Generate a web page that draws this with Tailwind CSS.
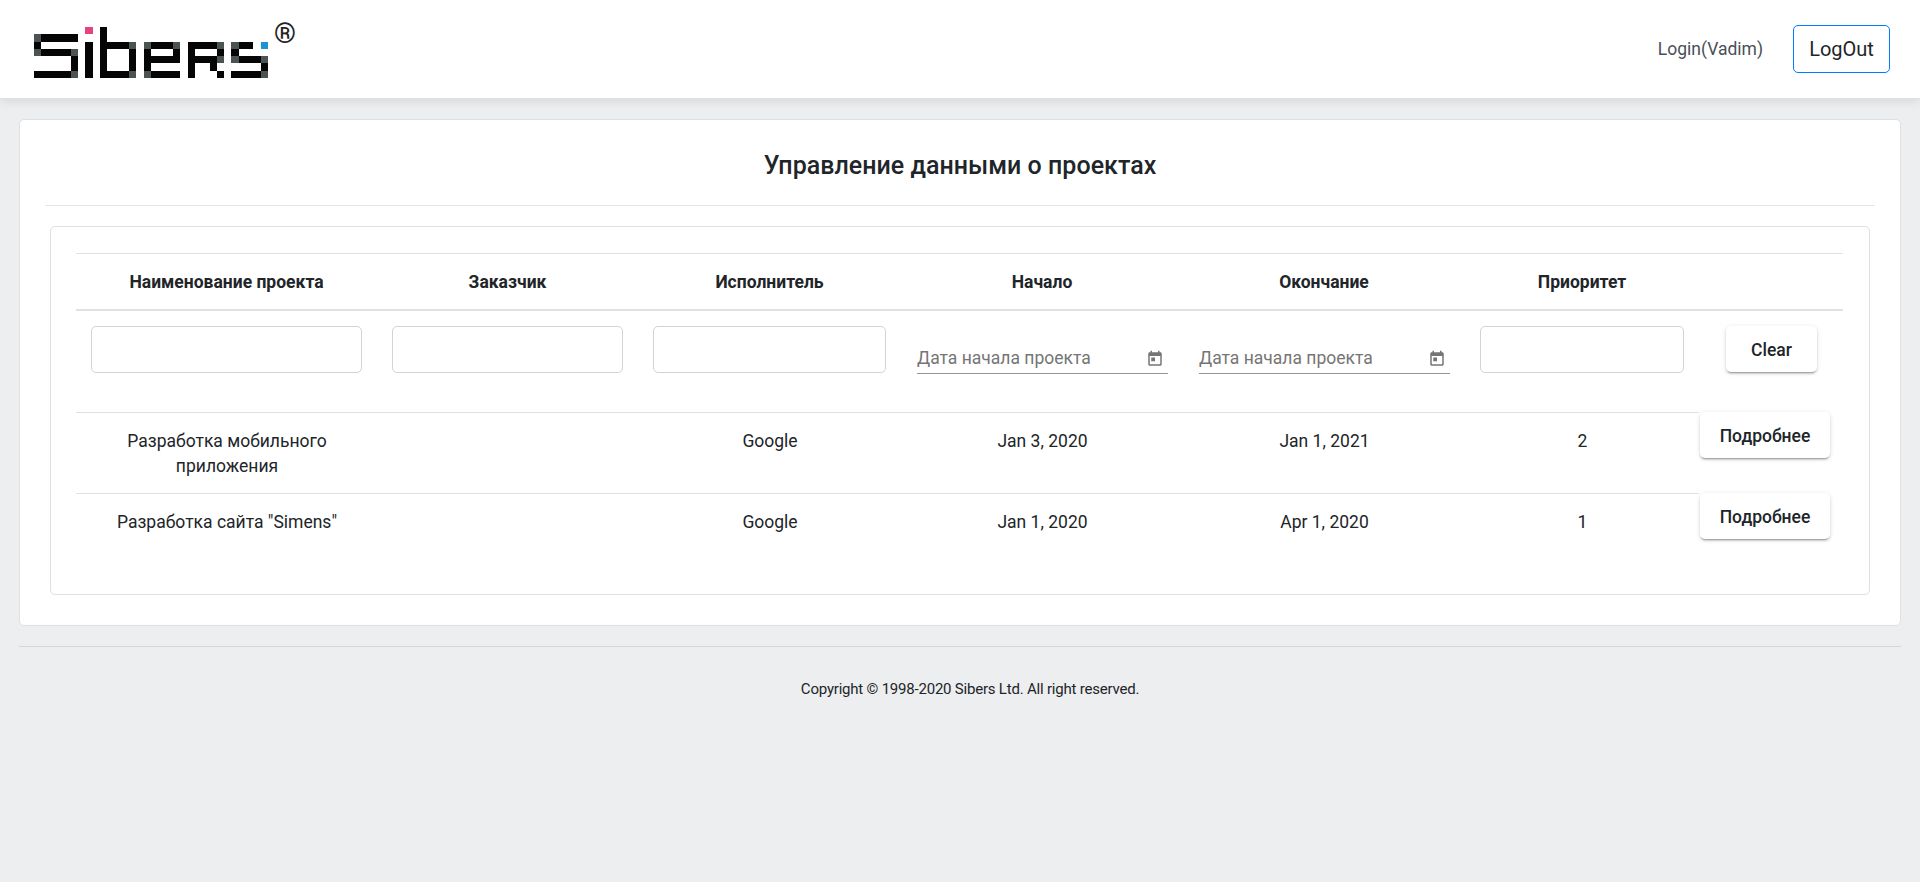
<!DOCTYPE html>
<html lang="ru">
<head>
<meta charset="utf-8">
<title>Sibers</title>
<script src="https://cdn.jsdelivr.net/npm/@tailwindcss/browser@4"></script>
</head>
<body class="min-h-screen bg-[#edeef0] font-[Roboto,sans-serif] text-[#212529]">
<header class="relative flex h-[99px] items-center justify-between border-b border-[#dee2e6] bg-white pl-[34px] pr-[30px] shadow-[0_2px_10px_rgba(0,0,0,0.1)]">
  <div class="flex items-start gap-[6px] self-start pt-[18px]">
    <svg class="mt-[9px] h-[51px] w-[234px]" viewBox="0 0 32 7" preserveAspectRatio="none" shape-rendering="crispEdges">
      <path fill="#050505" d="M1 1h5v1H1zM0 2h1v1H0zM1 3h4v1H1zM5 4h1v2H5zM0 6h5v1H0zM7 2h1v5H7zM9 0h1v7H9zM10 2h3v1h-3zM13 3h1v3h-1zM10 6h3v1h-3zM16 2h3v1h-3zM15 3h1v3h-1zM19 3h1v2h-1zM16 4h3v1h-3zM16 6h4v1h-4zM21 2h1v5h-1zM22 2h3v1h-3zM25 3h1v1h-1zM22 4h3v1h-3zM24 5h1v1h-1zM25 6h1v1h-1zM28 2h2v1h-2zM27 3h1v1h-1zM28 4h3v1h-3zM31 5h1v1h-1zM27 6h4v1h-4z"/>
      <path fill="#4c5355" d="M0 1h1v1H0zM0 3h1v1H0zM5 3h1v1H5zM5 6h1v1H5zM13 2h1v1h-1zM13 6h1v1h-1zM15 2h1v1h-1zM19 2h1v1h-1zM15 6h1v1h-1zM25 2h1v1h-1zM25 4h1v1h-1zM27 2h1v1h-1zM27 4h1v1h-1zM31 4h1v1h-1zM31 6h1v1h-1z"/>
      <path fill="#e8417f" d="M7 0h1v1H7z"/>
      <path fill="#1b93d4" d="M31 2h1v1h-1z"/>
    </svg>
    <span class="text-[28px] font-bold leading-[32px] text-[#222]">®</span>
  </div>
  <div class="flex items-center gap-[30px]">
    <span class="text-[17.5px] text-[#495057]">Login(Vadim)</span>
    <button class="h-12 w-[97px] rounded-[5px] border border-[#007bff] text-[20px]">LogOut</button>
  </div>
</header>
<main class="px-[19px] pt-5">
  <section class="h-[507px] rounded-[5px] border border-[#dfe0e2] bg-white px-[25px] pt-[25px]">
    <h1 class="h-[60px] text-center text-[25px] font-medium leading-[42px] tracking-[0.03px]">Управление данными о проектах</h1>
    <hr class="border-[#e5e5e5]">
    <div class="mx-[5px] mt-5 h-[369px] rounded-[5px] border border-[#dfdfdf] px-[25px] pt-[26px]">
      <table class="w-[1767px] table-fixed border-separate border-spacing-0 text-center text-[17.5px] leading-[25px]">
        <colgroup><col class="w-[301px]"><col class="w-[261px]"><col class="w-[263px]"><col class="w-[282px]"><col class="w-[282px]"><col class="w-[234px]"><col class="w-[144px]"></colgroup>
        <thead>
          <tr class="h-[58px] *:border-t *:border-b-2 *:border-[#dee2e6] *:p-0 *:pt-[2px] *:font-bold">
            <th>Наименование проекта</th><th>Заказчик</th><th>Исполнитель</th><th>Начало</th><th>Окончание</th><th>Приоритет</th><th></th>
          </tr>
        </thead>
        <tbody>
          <tr class="h-[101px] *:px-[15px] *:pt-[15px] *:align-top">
            <td><input class="block h-[47px] w-full rounded-[5px] border border-[#ced4da]"></td>
            <td><input class="block h-[47px] w-full rounded-[5px] border border-[#ced4da]"></td>
            <td><input class="block h-[47px] w-full rounded-[5px] border border-[#ced4da]"></td>
            <td><div class="ml-px flex h-12 items-end justify-between border-b border-[#949494] pb-[2px] pr-[4px] text-[#757575]"><span>Дата начала проекта</span><svg class="mb-[3px] h-[18px] w-[18px]" viewBox="0 0 24 24" fill="currentColor"><path d="M19 3h-1V1h-2v2H8V1H6v2H5c-1.11 0-1.99.9-1.99 2L3 19c0 1.1.89 2 2 2h14c1.1 0 2-.9 2-2V5c0-1.1-.9-2-2-2zm0 16H5V8h14v11zM7 10h5v5H7z"/></svg></div></td>
            <td><div class="ml-px flex h-12 items-end justify-between border-b border-[#949494] pb-[2px] pr-[4px] text-[#757575]"><span>Дата начала проекта</span><svg class="mb-[3px] h-[18px] w-[18px]" viewBox="0 0 24 24" fill="currentColor"><path d="M19 3h-1V1h-2v2H8V1H6v2H5c-1.11 0-1.99.9-1.99 2L3 19c0 1.1.89 2 2 2h14c1.1 0 2-.9 2-2V5c0-1.1-.9-2-2-2zm0 16H5V8h14v11zM7 10h5v5H7z"/></svg></div></td>
            <td><input class="block h-[47px] w-full rounded-[5px] border border-[#ced4da]"></td>
            <td><button class="mx-auto block h-[46px] w-[91px] rounded-[5px] bg-white pt-[2px] pl-px font-medium shadow-[0_3px_1px_-2px_rgba(0,0,0,0.2),0_2px_2px_0_rgba(0,0,0,0.14),0_1px_5px_0_rgba(0,0,0,0.12)]">Clear</button></td>
          </tr>
          <tr class="h-[81px] *:align-top">
            <td class="border-t border-[#dee2e6] pl-4 pr-[15px] pt-[16px]">Разработка мобильного приложения</td>
            <td class="border-t border-[#dee2e6]"></td>
            <td class="border-t border-[#dee2e6] pl-px pt-[16px]">Google</td>
            <td class="border-t border-[#dee2e6] pl-px pt-[16px]">Jan 3, 2020</td>
            <td class="border-t border-[#dee2e6] pl-px pt-[16px]">Jan 1, 2021</td>
            <td class="border-t border-[#dee2e6] pl-px pt-[16px]">2</td>
            <td class="pl-px"><button class="block h-[46px] w-[130px] rounded-[5px] bg-white pt-[2px] font-medium shadow-[0_3px_1px_-2px_rgba(0,0,0,0.2),0_2px_2px_0_rgba(0,0,0,0.14),0_1px_5px_0_rgba(0,0,0,0.12)]">Подробнее</button></td>
          </tr>
          <tr class="h-[56px] *:align-top">
            <td class="border-t border-[#dee2e6] pl-4 pr-[15px] pt-[16px]">Разработка сайта "Simens"</td>
            <td class="border-t border-[#dee2e6]"></td>
            <td class="border-t border-[#dee2e6] pl-px pt-[16px]">Google</td>
            <td class="border-t border-[#dee2e6] pl-px pt-[16px]">Jan 1, 2020</td>
            <td class="border-t border-[#dee2e6] pl-px pt-[16px]">Apr 1, 2020</td>
            <td class="border-t border-[#dee2e6] pl-px pt-[16px]">1</td>
            <td class="pl-px"><button class="block h-[46px] w-[130px] rounded-[5px] bg-white pt-[2px] font-medium shadow-[0_3px_1px_-2px_rgba(0,0,0,0.2),0_2px_2px_0_rgba(0,0,0,0.14),0_1px_5px_0_rgba(0,0,0,0.12)]">Подробнее</button></td>
          </tr>
        </tbody>
      </table>
    </div>
  </section>
  <hr class="mt-5 border-[#d5d6d8]">
</main>
<footer class="pl-5 pt-[31px] text-center text-[15px] leading-[22px] tracking-[-0.21px]">Copyright © 1998-2020 Sibers Ltd. All right reserved.</footer>
</body>
</html>
